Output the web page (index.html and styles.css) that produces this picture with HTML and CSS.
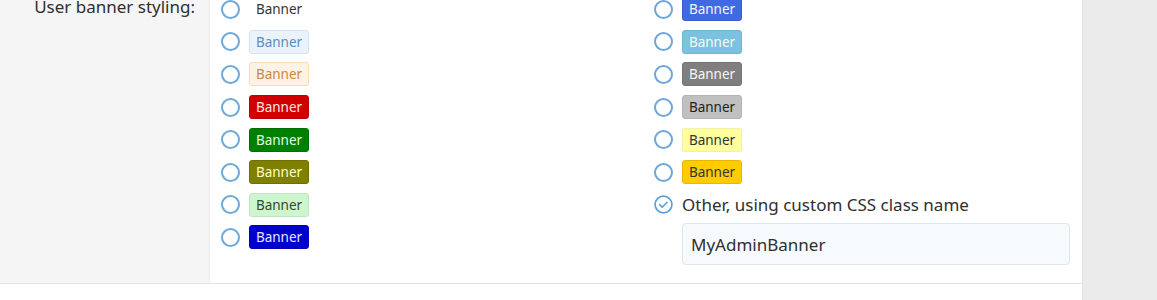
FILE: index.html
```html
<!DOCTYPE html>
<html lang="en">
<head>
  <meta charset="UTF-8">
  <title>User banner styling</title>
  <link rel="stylesheet" href="styles.css">
</head>
<body>
  <div class="page">
    <div class="block">
      <div class="form-row">
        <div class="row-label">User banner styling:</div>
        <div class="row-input">
          <ul class="choices">
            <li><span class="radio"></span><span class="banner plain">Banner</span></li>
            <li><span class="radio"></span><span class="banner royal">Banner</span></li>
            <li><span class="radio"></span><span class="banner pale-blue">Banner</span></li>
            <li><span class="radio"></span><span class="banner sky">Banner</span></li>
            <li><span class="radio"></span><span class="banner pale-orange">Banner</span></li>
            <li><span class="radio"></span><span class="banner gray">Banner</span></li>
            <li><span class="radio"></span><span class="banner red">Banner</span></li>
            <li><span class="radio"></span><span class="banner silver">Banner</span></li>
            <li><span class="radio"></span><span class="banner green">Banner</span></li>
            <li><span class="radio"></span><span class="banner pale-yellow">Banner</span></li>
            <li><span class="radio"></span><span class="banner olive">Banner</span></li>
            <li><span class="radio"></span><span class="banner gold">Banner</span></li>
            <li><span class="radio"></span><span class="banner pale-green">Banner</span></li>
            <li class="other">
              <span class="radio checked">
                <svg viewBox="0 0 18 18" width="18" height="18"><circle cx="9" cy="9" r="8" fill="none" stroke="#5d9fd6" stroke-width="1.6"/><path d="M5.4 9.2l2.4 2.4 4.6-4.7" fill="none" stroke="#5d9fd6" stroke-width="1.6" stroke-linecap="round" stroke-linejoin="round"/></svg>
              </span>
              <span class="other-text">Other, using custom CSS class name</span>
            </li>
            <li><span class="radio"></span><span class="banner blue">Banner</span></li>
            <li class="custom"><input class="text-input" type="text" value="MyAdminBanner"></li>
          </ul>
        </div>
      </div>
      <div class="form-row next">
        <div class="row-label">Allow user to edit their title:</div>
        <div class="row-input"></div>
      </div>
    </div>
    <div class="sidebar"></div>
  </div>
</body>
</html>
```

FILE: styles.css
```css
:root {
  --label-bg: #f5f5f5;
  --line: #e4e4e4;
  --radio: #6ea8d8;
  --text-main: #2f2f2f;
}
body {
  margin: 0;
  font-family: 'Noto Sans', 'Open Sans', sans-serif;
  color: var(--text-main);
  background: #fff;
  overflow: hidden;
}
.page {
  display: flex;
  height: 300px;
}
.block {
  width: 1082px;
  border-right: 1px solid #e2e2e2;
  background: #fff;
}
.sidebar {
  flex: 1;
  background: #ebebeb;
}
.form-row {
  display: flex;
  margin-top: -7px;
  border-bottom: 1px solid var(--line);
}
.row-label {
  width: 195px;
  flex-shrink: 0;
  padding: 2px 14px 0 0;
  text-align: right;
  font-size: 17px;
  background: var(--label-bg);
  border-right: 1px solid #ececec;
}
.row-input {
  flex: 1;
  padding: 0 12px 18px 11px;
}
.choices {
  list-style: none;
  margin: 0;
  padding: 0;
  display: grid;
  grid-template-columns: 433px 1fr;
  grid-auto-flow: row;
}
.choices li {
  display: flex;
  align-items: center;
  height: 32.6px;
  gap: 9px;
}
.radio {
  width: 15px;
  height: 15px;
  border: 2px solid var(--radio);
  border-radius: 50%;
  flex-shrink: 0;
}
.radio.checked {
  width: 19px;
  height: 19px;
  border: none;
  display: flex;
}
.radio.checked svg {
  width: 19px;
  height: 19px;
}
.banner {
  box-sizing: border-box;
  width: 60px;
  height: 24px;
  line-height: 22px;
  text-align: center;
  font-size: 13.5px;
  border: 1px solid transparent;
  border-radius: 3px;
}
.banner.plain { color: #333; }
.banner.pale-blue { background: #eaf3fc; border-color: #d2e4f5; color: #5d8db8; }
.banner.pale-orange { background: #fdf2e4; border-color: #f5dbb8; color: #c58a44; }
.banner.red { background: #d10000; border-color: #c00000; color: #ffe3e3; }
.banner.green { background: #008000; border-color: #007000; color: #e2ffe2; }
.banner.olive { background: #808000; border-color: #707000; color: #ffffc8; }
.banner.pale-green { background: #cff5cf; border-color: #bde8bd; color: #2f4a2f; }
.banner.blue { background: #0000cd; border-color: #0000b8; color: #e4e4ff; }
.banner.royal { background: #4169e1; border-color: #3a5ed0; color: #f0f4ff; }
.banner.sky { background: #7bc2de; border-color: #6fb6d4; color: #f4fbff; }
.banner.gray { background: #7f7f7f; border-color: #747474; color: #f6f6f6; }
.banner.silver { background: #c0c0c0; border-color: #b4b4b4; color: #222; }
.banner.pale-yellow { background: #ffff9e; border-color: #f3f0a8; color: #333; }
.banner.gold { background: #ffcc00; border-color: #e8b800; color: #333; }
.other-text {
  font-size: 17px;
}
.choices li.custom {
  grid-column: 2;
  height: auto;
  padding: 2px 0 0 28px;
}
.text-input {
  box-sizing: border-box;
  width: 388px;
  height: 42px;
  padding: 0 8px;
  font-family: inherit;
  font-size: 17px;
  color: var(--text-main);
  background: #f7fafc;
  border: 1px solid #e1e6ea;
  border-radius: 4px;
}
.form-row.next {
  margin-top: 0;
  border-bottom: none;
}
.form-row.next .row-label {
  background: #fff;
  border-right: none;
  padding-top: 10px;
}
```
